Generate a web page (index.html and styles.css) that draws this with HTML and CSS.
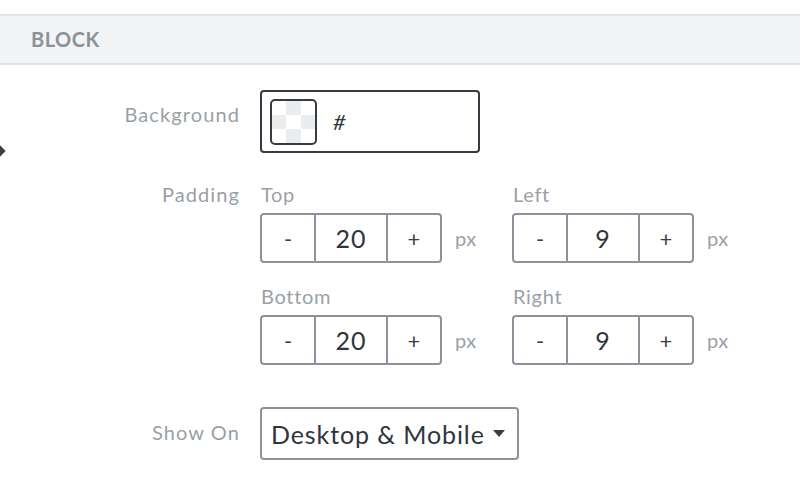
FILE: index.html
```html
<!DOCTYPE html>
<html>
<head>
<meta charset="utf-8">
<link rel="stylesheet" href="styles.css">
</head>
<body>
<div class="edge-marker"></div>
<div class="section-head">BLOCK</div>
<div class="form">
  <div class="row row-bg">
    <div class="label">Background</div>
    <div class="color-input">
      <div class="swatch">
        <span></span><span class="g"></span><span></span>
        <span class="g"></span><span></span><span class="g"></span>
        <span></span><span class="g"></span><span></span>
      </div>
      <span class="hash">#</span>
    </div>
  </div>
  <div class="row row-pad">
    <div class="label">Padding</div>
    <div class="pad-grid">
      <div class="field">
        <div class="sub">Top</div>
        <div class="stepper-line">
          <div class="stepper"><span class="btn">-</span><span class="val">20</span><span class="btn">+</span></div>
          <span class="unit">px</span>
        </div>
      </div>
      <div class="field">
        <div class="sub">Left</div>
        <div class="stepper-line">
          <div class="stepper"><span class="btn">-</span><span class="val">9</span><span class="btn">+</span></div>
          <span class="unit">px</span>
        </div>
      </div>
      <div class="field">
        <div class="sub">Bottom</div>
        <div class="stepper-line">
          <div class="stepper"><span class="btn">-</span><span class="val">20</span><span class="btn">+</span></div>
          <span class="unit">px</span>
        </div>
      </div>
      <div class="field">
        <div class="sub">Right</div>
        <div class="stepper-line">
          <div class="stepper"><span class="btn">-</span><span class="val">9</span><span class="btn">+</span></div>
          <span class="unit">px</span>
        </div>
      </div>
    </div>
  </div>
  <div class="row row-show">
    <div class="label">Show On</div>
    <div class="select">
      <span class="select-text">Desktop &amp; Mobile</span>
      <span class="caret"></span>
    </div>
  </div>
</div>
</body>
</html>
```

FILE: styles.css
```css
* { box-sizing: border-box; }
html, body {
  margin: 0;
  padding: 0;
  background: #ffffff;
  font-family: Lato, "Open Sans", "Liberation Sans", sans-serif;
  overflow: hidden;
}
body { position: relative; width: 800px; height: 490px; }

.edge-marker {
  position: absolute;
  left: -4px;
  top: 147px;
  width: 8px;
  height: 8px;
  background: #3a3f47;
  transform: rotate(45deg);
}

.section-head {
  margin-top: 14px;
  height: 51px;
  background: #f3f4f6;
  border-top: 2px solid #dfe2e6;
  border-bottom: 2px solid #dfe2e6;
  padding-left: 31px;
  font-size: 20px;
  font-weight: 700;
  color: #8c9198;
  line-height: 46px;
  letter-spacing: 0.5px;
}

.form { padding-top: 25px; }

.row {
  display: grid;
  grid-template-columns: 240px 1fr;
  column-gap: 20px;
}
.label {
  text-align: right;
  font-size: 20px;
  color: #9a9fa6;
  letter-spacing: 1.1px;
}

.row-bg .label { line-height: 48px; }
.color-input {
  width: 220px;
  height: 63px;
  border: 2px solid #363b43;
  border-radius: 4px;
  display: flex;
  align-items: center;
  padding-left: 8px;
}
.swatch {
  width: 47px;
  height: 46px;
  border: 2px solid #363b43;
  border-radius: 5px;
  display: grid;
  grid-template-columns: repeat(3, 1fr);
  grid-template-rows: repeat(3, 1fr);
  overflow: hidden;
}
.swatch .g { background: #ebecee; }
.hash {
  margin-left: 16px;
  font-size: 22px;
  color: #2f353d;
  font-style: italic;
}

.row-pad { margin-top: 31px; }
.row-pad .label { line-height: 20px; }
.pad-grid {
  display: grid;
  grid-template-columns: 252px 252px;
  row-gap: 23px;
}
.sub {
  font-size: 20px;
  line-height: 20px;
  color: #9a9fa6;
  letter-spacing: 0.7px;
  padding-left: 1px;
}
.stepper-line {
  margin-top: 9px;
  display: flex;
  align-items: center;
}
.stepper {
  display: flex;
  height: 50px;
  border: 2px solid #8d939b;
  border-radius: 4px;
}
.stepper .btn {
  width: 52px;
  display: flex;
  align-items: center;
  justify-content: center;
  font-size: 22px;
  color: #3a3f47;
}
.stepper .val {
  width: 74px;
  border-left: 2px solid #8d939b;
  border-right: 2px solid #8d939b;
  display: flex;
  align-items: center;
  justify-content: center;
  font-size: 25px;
  letter-spacing: 1px;
  color: #2f353d;
}
.unit {
  margin-left: 13px;
  font-size: 20px;
  letter-spacing: 0.5px;
  color: #9a9fa6;
}

.row-show { margin-top: 42px; }
.row-show .label { line-height: 50px; }
.select {
  width: 259px;
  height: 53px;
  border: 2px solid #8d939b;
  border-radius: 4px;
  display: flex;
  align-items: center;
  padding-left: 9px;
}
.select-text {
  font-size: 25px;
  color: #2f353d;
  letter-spacing: 0.9px;
}
.caret {
  margin-left: 8px;
  width: 0;
  height: 0;
  border-left: 6px solid transparent;
  border-right: 6px solid transparent;
  border-top: 7px solid #3a3f47;
}
```
